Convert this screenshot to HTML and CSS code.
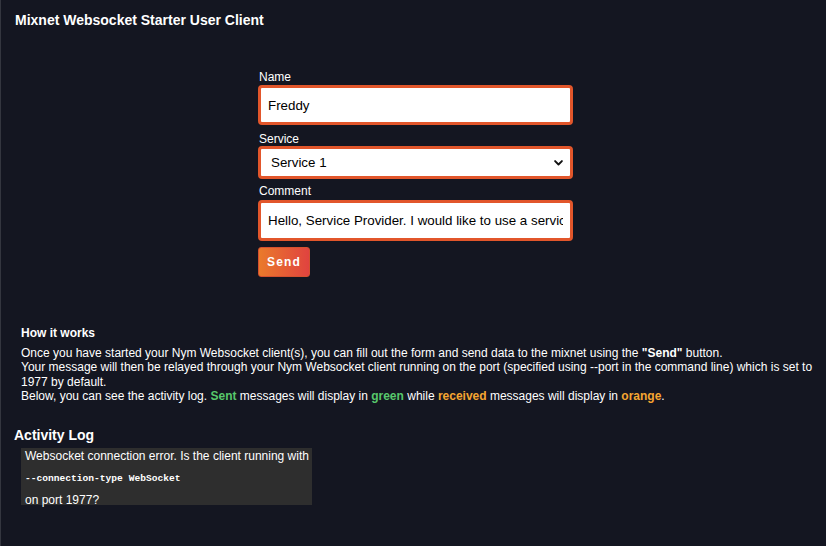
FILE: index.html
```html
<!DOCTYPE html>
<html>
<head>
<meta charset="utf-8">
<link rel="stylesheet" href="styles.css">
</head>
<body>
<header class="topbar">
  <h1 class="title">Mixnet Websocket Starter User Client</h1>
</header>
<main class="main">
  <form class="form">
    <label class="label label-name" for="name">Name</label>
    <input class="field field-name" id="name" type="text" value="Freddy">
    <label class="label label-service" for="service">Service</label>
    <div class="select-wrap">
      <select class="field field-select" id="service">
        <option>Service 1</option>
        <option>Service 2</option>
      </select>
      <svg class="chevron" width="9" height="6" viewBox="0 0 9 6"><path d="M1.1 1.1 L4.5 4.5 L7.9 1.1" fill="none" stroke="#111" stroke-width="1.9" stroke-linecap="round" stroke-linejoin="round"/></svg>
    </div>
    <label class="label label-comment" for="comment">Comment</label>
    <input class="field field-comment" id="comment" type="text" value="Hello, Service Provider. I would like to use a service of yours.">
    <div class="actions"><button class="send" type="button">Send</button></div>
  </form>
  <section class="how">
    <h2 class="how-title">How it works</h2>
    <p class="how-text">Once you have started your Nym Websocket client(s), you can fill out the form and send data to the mixnet using the <b>"Send"</b> button.<br>Your message will then be relayed through your Nym Websocket client running on the port (specified using --port in the command line) which is set to 1977 by default.<br>Below, you can see the activity log. <b class="green">Sent</b> messages will display in <b class="green">green</b> while <b class="orange">received</b> messages will display in <b class="orange">orange</b>.</p>
  </section>
  <section class="log">
    <h2 class="log-title">Activity Log</h2>
    <div class="log-box">
      <div class="log-line">Websocket connection error. Is the client running with</div>
      <div class="log-line log-code"><code>--connection-type WebSocket</code></div>
      <div class="log-line">on port 1977?</div>
    </div>
  </section>
</main>
</body>
</html>
```
FILE: styles.css
```css
html, body {
  margin: 0;
  padding: 0;
}
body {
  background: #141621;
  color: #ffffff;
  font-family: "Liberation Sans", Arial, sans-serif;
  min-height: 546px;
  box-sizing: border-box;
  border-left: 1px solid #34363f;
}
.topbar {
  padding: 12px 14px 0;
}
.title {
  margin: 0;
  font-size: 14px;
  line-height: 16px;
  font-weight: bold;
}
.form {
  width: 315px;
  margin: 42px 0 0 257px;
  display: flex;
  flex-direction: column;
}
.label {
  display: block;
  font-size: 12px;
  line-height: 14px;
  padding-left: 1px;
}
.label-name { margin-bottom: 1px; }
.label-service { margin-top: 7px; }
.label-comment { margin-top: 5px; margin-bottom: 2px; }
.field {
  box-sizing: border-box;
  width: 315px;
  border: 3px solid #e2562b;
  border-radius: 4px;
  background: #ffffff;
  color: #000;
  font-family: "Liberation Sans", Arial, sans-serif;
  font-size: 13.333px;
  margin: 0;
  outline: none;
}
.field-name {
  height: 40px;
  padding: 0 7px;
}
.select-wrap {
  position: relative;
  height: 33px;
}
.field-select {
  appearance: none;
  -webkit-appearance: none;
  height: 33px;
  padding: 0 10px;
}
.chevron {
  position: absolute;
  right: 10px;
  top: 14px;
  pointer-events: none;
}
.field-comment {
  height: 41px;
  padding: 0 7px;
}
.actions {
  margin-top: 6px;
}
.send {
  width: 52px;
  height: 30px;
  border: 1px solid #d4502f;
  border-radius: 3px;
  background: linear-gradient(90deg, #ea7a2b 0%, #e0433f 100%);
  color: #ffffff;
  font-family: "Liberation Sans", Arial, sans-serif;
  font-size: 12px;
  font-weight: bold;
  letter-spacing: 1.2px;
  padding: 0;
}
.how {
  padding: 0 6px 0 20px;
  margin-top: 49px;
}
.how-title {
  margin: 0;
  font-size: 12px;
  line-height: 14px;
  font-weight: bold;
}
.how-text {
  margin: 6px 0 0;
  font-size: 12px;
  line-height: 14.3px;
}
.green { color: #58c86c; }
.orange { color: #f5a531; }
.log {
  margin-top: 24px;
  padding-left: 13px;
}
.log-title {
  margin: 0;
  font-size: 14px;
  line-height: 16px;
  font-weight: bold;
}
.log-box {
  margin: 5px 0 0 7px;
  width: 291px;
  background: #2e2e2e;
  padding: 1px 0 0 4px;
  box-sizing: border-box;
  height: 57px;
  display: flex;
  flex-direction: column;
  gap: 7px;
}
.log-line {
  font-size: 12px;
  line-height: 14px;
  white-space: nowrap;
}
.log-code code {
  font-family: "Liberation Mono", "Courier New", monospace;
  font-size: 9.6px;
  font-weight: bold;
}
```
